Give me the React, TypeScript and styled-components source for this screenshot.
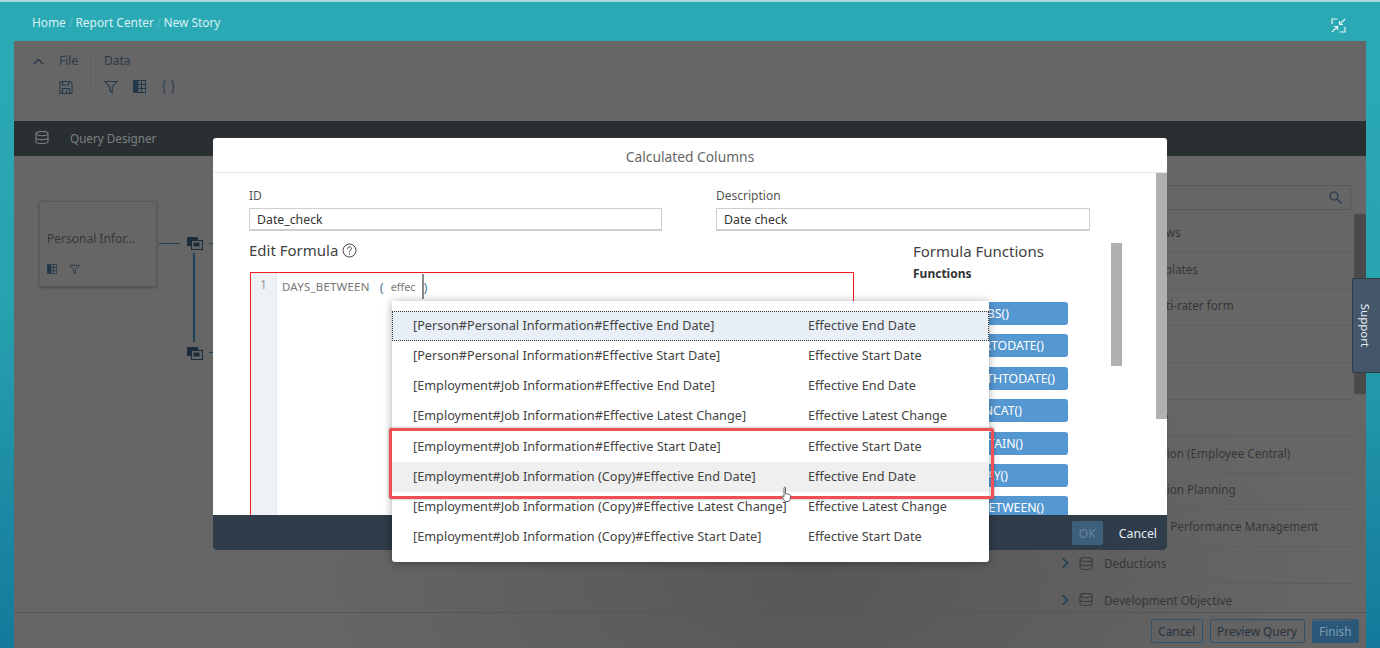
import React from 'react';
import styled, { createGlobalStyle } from 'styled-components';

const FONT = '"Noto Sans", "Open Sans", Arial, sans-serif';

const GlobalStyle = createGlobalStyle`
  html, body {
    margin: 0;
    padding: 0;
    height: 100%;
    overflow: hidden;
  }
  body {
    font-family: ${FONT};
    font-size: 12px;
    color: #333;
  }
`;

const Page = styled.div`
  position: relative;
  width: 1380px;
  height: 648px;
  display: flex;
  flex-direction: column;
  overflow: hidden;
  border-top: 2px solid #a9d9dc;
  box-sizing: border-box;
  background: linear-gradient(180deg, #2baab5 0%, #27a3b0 45%, #14799b 100%);
`;

const Header = styled.header`
  height: 39px;
  flex: none;
  display: flex;
  align-items: center;
  justify-content: space-between;
  padding: 0 34px 0 32px;
  box-sizing: border-box;
`;

const Crumbs = styled.nav`
  display: flex;
  align-items: center;
  gap: 2.6px;
  margin-top: 1px;
  color: #d9f1f3;
  font-size: 11.9px;
`;

const CrumbSlash = styled.span`
  color: #56bcc5;
`;

const ExitIcon = styled.svg`
  margin-top: 8px;
`;

const Workspace = styled.main`
  flex: 1;
  margin: 0 14px;
  display: flex;
  flex-direction: column;
  min-height: 0;
  background: radial-gradient(ellipse 520px 260px at 800px 540px, #575757 0%, #666 100%);
`;

const Toolbar = styled.section`
  height: 80px;
  flex: none;
  display: flex;
  padding-top: 16px;
  box-sizing: border-box;
`;

const Collapse = styled.div`
  width: 45px;
  padding: 1px 0 0 19px;
  box-sizing: border-box;
  color: #2c3e50;

  svg {
    display: block;
  }
`;

const ToolGroup = styled.div<{ $divided?: boolean; $width: number }>`
  width: ${(p) => p.$width}px;
  height: 37px;
  padding-left: ${(p) => (p.$divided ? 13 : 0)}px;
  box-sizing: border-box;
  border-left: ${(p) => (p.$divided ? '1px solid #5c5f61' : 'none')};
`;

const ToolTitle = styled.div`
  margin-top: -4px;
  color: #2e3b47;
  font-size: 12px;
  line-height: 16px;
`;

const ToolIcons = styled.div`
  display: flex;
  gap: 15px;
  margin-top: 11px;
  color: #22384c;
`;

const DesignerBar = styled.section`
  height: 35px;
  flex: none;
  display: flex;
  align-items: center;
  gap: 21px;
  padding: 0 0 2px 21px;
  box-sizing: border-box;
  background: #2a2f32;
  color: #7c7f81;
  font-size: 11.7px;
`;

const Designer = styled.section`
  flex: 1;
  display: flex;
  min-height: 0;
`;

const Canvas = styled.div`
  position: relative;
  flex: 1;
`;

const NodeCard = styled.div`
  position: absolute;
  left: 25px;
  top: 45px;
  width: 118px;
  height: 86px;
  padding: 29px 7px 0;
  box-sizing: border-box;
  background: #666;
  border: 1px solid #595959;
  border-radius: 3px;
  box-shadow: 0 1px 3px rgba(0, 0, 0, 0.25);
  color: #383838;
  font-size: 12px;
  line-height: 16px;
`;

const NodeIcons = styled.div`
  display: flex;
  gap: 12px;
  margin-top: 17px;
  color: #22384c;
`;

const Wire = styled.div<{ $x: number; $y: number; $w: number; $h: number }>`
  position: absolute;
  left: ${(p) => p.$x}px;
  top: ${(p) => p.$y}px;
  width: ${(p) => p.$w}px;
  height: ${(p) => p.$h}px;
  background: #1c4059;
`;

const Join = styled.div<{ $y: number }>`
  position: absolute;
  left: 173px;
  top: ${(p) => p.$y}px;
  color: #1d2c3a;
`;

const SidePanel = styled.aside`
  position: relative;
  width: 316px;
  flex: none;
  border-left: 1px solid #5c5c5c;
  padding: 29px 15px 0 0;
  box-sizing: border-box;
`;

const SearchBox = styled.div`
  height: 23px;
  margin-bottom: 6px;
  border: 1px solid #555a5e;
  display: flex;
  align-items: center;
  justify-content: flex-end;
  padding-right: 8px;
  color: #22384c;
`;

const PanelRow = styled.div`
  height: 36.8px;
  display: flex;
  align-items: center;
  gap: 10px;
  padding: 0 0 4px 10px;
  box-sizing: border-box;
  border-bottom: 1px solid #5e5e5e;
  color: #373737;
  font-size: 11.7px;
  white-space: nowrap;
`;

const PanelRowName = styled.span`
  margin-left: 1px;
`;

const PanelThumb = styled.div`
  position: absolute;
  right: 0;
  top: 58px;
  width: 12px;
  height: 180px;
  background: #4a4a4a;
`;

const FooterBar = styled.footer`
  height: 36px;
  flex: none;
  border-top: 1px solid #565656;
  box-sizing: border-box;
  display: flex;
  justify-content: flex-end;
  align-items: center;
  gap: 7px;
  padding: 0 7px 0 0;
`;

const FootButton = styled.div<{ $primary?: boolean }>`
  height: 22px;
  padding: 0 6.5px;
  display: flex;
  align-items: center;
  border-radius: 2px;
  border: 1px solid ${(p) => (p.$primary ? '#2b5878' : '#2f526e')};
  background: ${(p) => (p.$primary ? '#2b5878' : 'transparent')};
  color: ${(p) => (p.$primary ? '#7f9db4' : '#26333f')};
  font-size: 11.8px;
`;

const Modal = styled.section`
  position: absolute;
  left: 213px;
  top: 136px;
  width: 954px;
  height: 412px;
  display: flex;
  flex-direction: column;
  background: #fff;
  border-radius: 3px;
  overflow: hidden;
`;

const ModalTitle = styled.header`
  height: 35px;
  flex: none;
  border-bottom: 1px solid #e5e5e5;
  display: flex;
  align-items: center;
  justify-content: center;
  padding-top: 3px;
  box-sizing: border-box;
  color: #666;
  font-size: 13.8px;
`;

const ModalBody = styled.div`
  flex: 1;
  min-height: 0;
  position: relative;
  overflow: hidden;
  padding: 14px 0 0 36px;
`;

const ModalThumb = styled.div`
  position: absolute;
  right: 0;
  top: 0;
  width: 11px;
  height: 246px;
  background: #b0b0b0;
`;

const FunctionsThumb = styled.div`
  position: absolute;
  left: 898px;
  top: 70px;
  width: 11px;
  height: 123px;
  background: #b0b0b0;
`;

const FieldRow = styled.div`
  display: flex;
  gap: 54px;
`;

const Field = styled.div<{ $width: number }>`
  width: ${(p) => p.$width}px;
`;

const FieldLabel = styled.div`
  color: #555;
  font-size: 12px;
  line-height: 17px;
  margin-bottom: 4px;
`;

const FieldInput = styled.div`
  height: 23px;
  box-sizing: border-box;
  border: 1px solid #cfcfcf;
  border-bottom-width: 2px;
  display: flex;
  align-items: center;
  padding-left: 7px;
  color: #333;
  font-size: 12.3px;
`;

const LowerRow = styled.div`
  display: flex;
`;

const FormColumn = styled.div`
  width: 605px;
  flex: none;
`;

const FormulaHeading = styled.h3`
  margin: 9px 0 11px;
  display: flex;
  align-items: center;
  gap: 4px;
  font-weight: 400;
  font-size: 15px;
  line-height: 21px;
  color: #3f3f3f;
`;

const Editor = styled.div`
  height: 260px;
  box-sizing: border-box;
  margin-left: 1px;
  border: 1px solid #f01a20;
  display: flex;
`;

const Gutter = styled.div`
  width: 26px;
  flex: none;
  background: #eef2f7;
  border-right: 1px solid #e6e9ee;
  box-sizing: border-box;
  color: #999;
  font-size: 12px;
  line-height: 24px;
  text-align: center;
`;

const CodeLine = styled.div`
  display: flex;
  align-items: center;
  height: 15px;
  margin: 6px 0 0 5px;
  font-size: 11.5px;
  letter-spacing: 0.2px;
  color: #777;
  white-space: nowrap;
`;

const Paren = styled.span<{ $before: number; $after: number }>`
  margin: 0 ${(p) => p.$after}px 0 ${(p) => p.$before}px;
  color: #4a7ba6;
  font-size: 13px;
`;

const EffecWord = styled.span`
  font-size: 10.8px;
  letter-spacing: 0;
`;

const Caret = styled.span`
  display: inline-block;
  width: 2px;
  height: 25px;
  margin-left: 6px;
  background: #8a8a8a;
`;

const FunctionsColumn = styled.div`
  margin-left: 59px;
  width: 155px;
  flex: none;
`;

const FunctionsTitle = styled.h3`
  margin: 10px 0 0;
  font-weight: 400;
  font-size: 15px;
  line-height: 21px;
  color: #3f3f3f;
  white-space: nowrap;
`;

const FunctionsSub = styled.h4`
  margin: 3px 0 20px;
  font-weight: 700;
  font-size: 12px;
  line-height: 17px;
  color: #333;
`;

const FunctionList = styled.div`
  display: flex;
  flex-direction: column;
  gap: 9.4px;
  margin-left: -13px;
`;

const FunctionButton = styled.div<{ $inset: number }>`
  width: 168px;
  height: 23px;
  flex: none;
  box-sizing: border-box;
  padding-right: ${(p) => p.$inset}px;
  display: flex;
  align-items: center;
  justify-content: flex-end;
  background: #5597d0;
  border-radius: 3px;
  color: #fff;
  font-size: 12.3px;
`;

const ModalFooter = styled.footer`
  height: 35px;
  flex: none;
  background: #2f3c49;
  display: flex;
  align-items: center;
  justify-content: flex-end;
  gap: 16px;
  padding: 1px 10px 0 0;
  box-sizing: border-box;
`;

const OkButton = styled.div`
  width: 31px;
  height: 24px;
  display: flex;
  align-items: center;
  justify-content: center;
  background: #3d5f7b;
  border-radius: 2px;
  color: #64859f;
  font-size: 12px;
`;

const CancelLink = styled.div`
  color: #e3edf3;
  font-size: 12.3px;
`;

const Suggestions = styled.ul`
  position: absolute;
  left: 392px;
  top: 299px;
  width: 597px;
  height: 261px;
  margin: 0;
  padding: 10px 0 0;
  box-sizing: border-box;
  list-style: none;
  background: #fff;
  border-radius: 0 0 3px 3px;
  box-shadow: 0 1px 8px rgba(0, 0, 0, 0.35);
`;

const Suggestion = styled.li<{ $state?: 'focus' | 'hover' }>`
  height: 30.15px;
  box-sizing: border-box;
  display: flex;
  align-items: center;
  padding: 0 0 2px 21px;
  font-size: 12.7px;
  color: #444;
  white-space: nowrap;
  background: ${(p) =>
    p.$state === 'focus' ? '#e8eff7' : p.$state === 'hover' ? '#efefef' : 'transparent'};
  outline: ${(p) => (p.$state === 'focus' ? '1px dotted #333' : 'none')};
  outline-offset: -1px;
`;

const SuggestionPath = styled.span`
  width: 395px;
  flex: none;
`;

const Highlight = styled.div`
  position: absolute;
  left: 389px;
  top: 426px;
  width: 605px;
  height: 71px;
  box-sizing: border-box;
  border: 3px solid #ef5055;
  border-radius: 2px;
  box-shadow: 0 0 3px rgba(0, 0, 0, 0.35);
  pointer-events: none;
`;

const Pointer = styled.div`
  position: absolute;
  left: 780px;
  top: 484px;
  color: #555;
  line-height: 0;
`;

const SupportTab = styled.div`
  position: absolute;
  left: 1352px;
  top: 276px;
  width: 28px;
  height: 95px;
  display: flex;
  align-items: center;
  justify-content: center;
  padding-right: 2px;
  background: #445669;
  border: 1px solid #2d3a46;
  border-right: none;
  border-radius: 2px 0 0 2px;
  box-sizing: border-box;
  color: #e8eef2;
  font-size: 11.5px;
`;

const SupportLabel = styled.span`
  transform: rotate(90deg);
`;

function SaveIcon() {
  return (
    <svg width="14" height="15" viewBox="0 0 14 15" fill="none" stroke="currentColor" strokeWidth="1.1">
      <path d="M1 1.5h10l2 2v10H1z" />
      <path d="M3.500 1.500v3.500h6V1.500M3.500 13.500v-5h7v5M7.500 10.500v3" />
    </svg>
  );
}

function FilterIcon({ size = 14 }: { size?: number }) {
  return (
    <svg width={size} height={size} viewBox="0 0 14 14" fill="none" stroke="currentColor" strokeWidth="1.1">
      <path d="M1 1.500h12L8.200 7v5.500L5.800 11V7z" />
    </svg>
  );
}

function TableIcon({ size = 13 }: { size?: number }) {
  return (
    <svg width={size} height={size} viewBox="0 0 13 13" fill="none">
      <rect x="0.5" y="0.5" width="5" height="12" fill="currentColor" />
      <path d="M0.500 4.500h12M0.500 8.500h12M8.500 0.500v12M0.500 0.500h12v12H0.500z" stroke="currentColor" strokeWidth="1" />
    </svg>
  );
}

function BracesIcon() {
  return (
    <svg width="15" height="14" viewBox="0 0 15 14" fill="none" stroke="currentColor" strokeWidth="1">
      <path d="M5 .5h-.5C3 .5 3 1.500 3 3v2.500C3 6.500 2.500 7 1.500 7 2.500 7 3 7.500 3 8.500V11c0 1.500 0 2.500 1.500 2.500H5" />
      <path d="M10 .5h.5C12 .5 12 1.500 12 3v2.500c0 1 .5 1.500 1.500 1.500-1 0-1.500.5-1.500 1.500V11c0 1.500 0 2.500-1.500 2.500H10" />
    </svg>
  );
}

function DatabaseIcon({ color = 'currentColor' }: { color?: string }) {
  return (
    <svg width="14" height="13" viewBox="0 0 14 13" fill="none" stroke={color} strokeWidth="1.1">
      <ellipse cx="7" cy="2.6" rx="6" ry="2.1" />
      <path d="M1 2.600v7.800c0 1.200 2.700 2.100 6 2.100s6-.9 6-2.100V2.600M1 6.500c0 1.200 2.700 2.100 6 2.100s6-.9 6-2.100" />
    </svg>
  );
}

function JoinIcon() {
  return (
    <svg width="16" height="13" viewBox="0 0 16 13" fill="none" stroke="currentColor" strokeWidth="1.1">
      <rect x="0.5" y="0.5" width="10" height="8" fill="currentColor" />
      <rect x="4.5" y="3.5" width="11" height="9" fill="#666" />
      <rect x="6.5" y="5.5" width="6" height="4" fill="currentColor" stroke="none" />
    </svg>
  );
}

function Chevron() {
  return (
    <svg width="8" height="12" viewBox="0 0 8 12" fill="none" stroke="#1c4059" strokeWidth="1.5">
      <path d="M1.500 1l5 5-5 5" />
    </svg>
  );
}

const panelRows = [
  'Custom Views',
  'Forms Templates',
  'Legacy Multi-rater form',
  'Benefits',
  'Calibration',
  'Compliance',
  'Compensation (Employee Central)',
  'Compensation Planning',
  'Continuous Performance Management',
  'Deductions',
  'Development Objective',
];

const functionButtons = [
  { name: 'ABS()', inset: 59 },
  { name: 'YEARTODATE()', inset: 24 },
  { name: 'MONTHTODATE()', inset: 13 },
  { name: 'CONCAT()', inset: 46 },
  { name: 'CONTAIN()', inset: 45 },
  { name: 'TODAY()', inset: 60 },
  { name: 'DAYS_BETWEEN()', inset: 24 },
];

const suggestions: { path: string; name: string; state?: 'focus' | 'hover' }[] = [
  { path: '[Person#Personal Information#Effective End Date]', name: 'Effective End Date', state: 'focus' },
  { path: '[Person#Personal Information#Effective Start Date]', name: 'Effective Start Date' },
  { path: '[Employment#Job Information#Effective End Date]', name: 'Effective End Date' },
  { path: '[Employment#Job Information#Effective Latest Change]', name: 'Effective Latest Change' },
  { path: '[Employment#Job Information#Effective Start Date]', name: 'Effective Start Date' },
  { path: '[Employment#Job Information (Copy)#Effective End Date]', name: 'Effective End Date', state: 'hover' },
  { path: '[Employment#Job Information (Copy)#Effective Latest Change]', name: 'Effective Latest Change' },
  { path: '[Employment#Job Information (Copy)#Effective Start Date]', name: 'Effective Start Date' },
];

export default function App() {
  return (
    <>
      <GlobalStyle />
      <Page>
        <Header>
          <Crumbs>
            <span>Home</span>
            <CrumbSlash>/</CrumbSlash>
            <span>Report Center</span>
            <CrumbSlash>/</CrumbSlash>
            <span>New Story</span>
          </Crumbs>
          <ExitIcon width="15" height="15" viewBox="0 0 15 15" fill="none" stroke="#e6f6f7" strokeWidth="1.200">
            <path d="M1 6V1h5.500M14 9v5H8.500" />
            <path d="M8.500 6.500L14 1M8.500 3v3.500H12M6.500 8.500L1 14M3 8.500h3.500V12" />
          </ExitIcon>
        </Header>
        <Workspace>
          <Toolbar>
            <Collapse>
              <svg width="11" height="7" viewBox="0 0 11 7" fill="none" stroke="currentColor" strokeWidth="1.5">
                <path d="M1 6l4.500-4.500L10 6" />
              </svg>
            </Collapse>
            <ToolGroup $width={31}>
              <ToolTitle>File</ToolTitle>
              <ToolIcons>
                <SaveIcon />
              </ToolIcons>
            </ToolGroup>
            <ToolGroup $divided $width={150}>
              <ToolTitle>Data</ToolTitle>
              <ToolIcons>
                <FilterIcon />
                <TableIcon />
                <BracesIcon />
              </ToolIcons>
            </ToolGroup>
          </Toolbar>
          <DesignerBar>
            <DatabaseIcon />
            <span>Query Designer</span>
          </DesignerBar>
          <Designer>
            <Canvas>
              <NodeCard>
                Personal Infor...
                <NodeIcons>
                  <TableIcon size={10} />
                  <FilterIcon size={11} />
                </NodeIcons>
              </NodeCard>
              <Wire $x={145} $y={87} $w={21} $h={1} />
              <Join $y={81}>
                <JoinIcon />
              </Join>
              <Wire $x={195} $y={87} $w={10} $h={1} />
              <Wire $x={179} $y={97} $w={1.5} $h={89} />
              <Join $y={191}>
                <JoinIcon />
              </Join>
              <Wire $x={195} $y={196} $w={10} $h={1} />
            </Canvas>
            <SidePanel>
              <SearchBox>
                <svg width="13" height="13" viewBox="0 0 13 13" fill="none" stroke="currentColor" strokeWidth="1.2">
                  <circle cx="5" cy="5" r="4" />
                  <path d="M8 8l4.500 4.500" />
                </svg>
              </SearchBox>
              {panelRows.map((name) => (
                <PanelRow key={name}>
                  <Chevron />
                  <DatabaseIcon color="#3c3c3c" />
                  <PanelRowName>{name}</PanelRowName>
                </PanelRow>
              ))}
              <PanelThumb />
            </SidePanel>
          </Designer>
          <FooterBar>
            <FootButton>Cancel</FootButton>
            <FootButton>Preview Query</FootButton>
            <FootButton $primary>Finish</FootButton>
          </FooterBar>
        </Workspace>

        <Modal>
          <ModalTitle>Calculated Columns</ModalTitle>
          <ModalBody>
            <FieldRow>
              <Field $width={413}>
                <FieldLabel>ID</FieldLabel>
                <FieldInput>Date_check</FieldInput>
              </Field>
              <Field $width={374}>
                <FieldLabel>Description</FieldLabel>
                <FieldInput>Date check</FieldInput>
              </Field>
            </FieldRow>
            <LowerRow>
              <FormColumn>
                <FormulaHeading>
                  Edit Formula
                  <svg width="15" height="15" viewBox="0 0 15 15" fill="none" stroke="#444" strokeWidth="1">
                    <circle cx="7.500" cy="7.500" r="6.500" />
                    <path d="M5.500 5.800c0-1.200.9-1.900 2-1.900s2 .7 2 1.800c0 1.600-2 1.500-2 3.200M7.500 10.200v1.300" />
                  </svg>
                </FormulaHeading>
                <Editor>
                  <Gutter>1</Gutter>
                  <CodeLine>
                    DAYS_BETWEEN
                    <Paren $before={10} $after={7}>(</Paren>
                    <EffecWord>effec</EffecWord>
                    <Caret />
                    <Paren $before={0} $after={0}>)</Paren>
                  </CodeLine>
                </Editor>
              </FormColumn>
              <FunctionsColumn>
                <FunctionsTitle>Formula Functions</FunctionsTitle>
                <FunctionsSub>Functions</FunctionsSub>
                <FunctionList>
                  {functionButtons.map((item) => (
                    <FunctionButton key={item.name} $inset={item.inset}>{item.name}</FunctionButton>
                  ))}
                </FunctionList>
              </FunctionsColumn>
            </LowerRow>
            <FunctionsThumb />
            <ModalThumb />
          </ModalBody>
          <ModalFooter>
            <OkButton>OK</OkButton>
            <CancelLink>Cancel</CancelLink>
          </ModalFooter>
        </Modal>

        <Suggestions>
          {suggestions.map((item) => (
            <Suggestion key={item.path} $state={item.state}>
              <SuggestionPath>{item.path}</SuggestionPath>
              <span>{item.name}</span>
            </Suggestion>
          ))}
        </Suggestions>
        <Highlight />
        <Pointer>
          <svg width="13" height="17" viewBox="0 0 13 17" fill="#fff" stroke="#444" strokeWidth="0.8">
            <path d="M4 1.500c.6-.6 1.500-.3 1.500.6V8l1-.3 1 .2 1 .3 1.500.6c.5.3.6.8.6 1.300l-.6 3.400-1 2H5l-3-4.500c-.4-.6-.1-1.200.5-1.200l1.500 1z" />
          </svg>
        </Pointer>
        <SupportTab>
          <SupportLabel>Support</SupportLabel>
        </SupportTab>
      </Page>
    </>
  );
}
